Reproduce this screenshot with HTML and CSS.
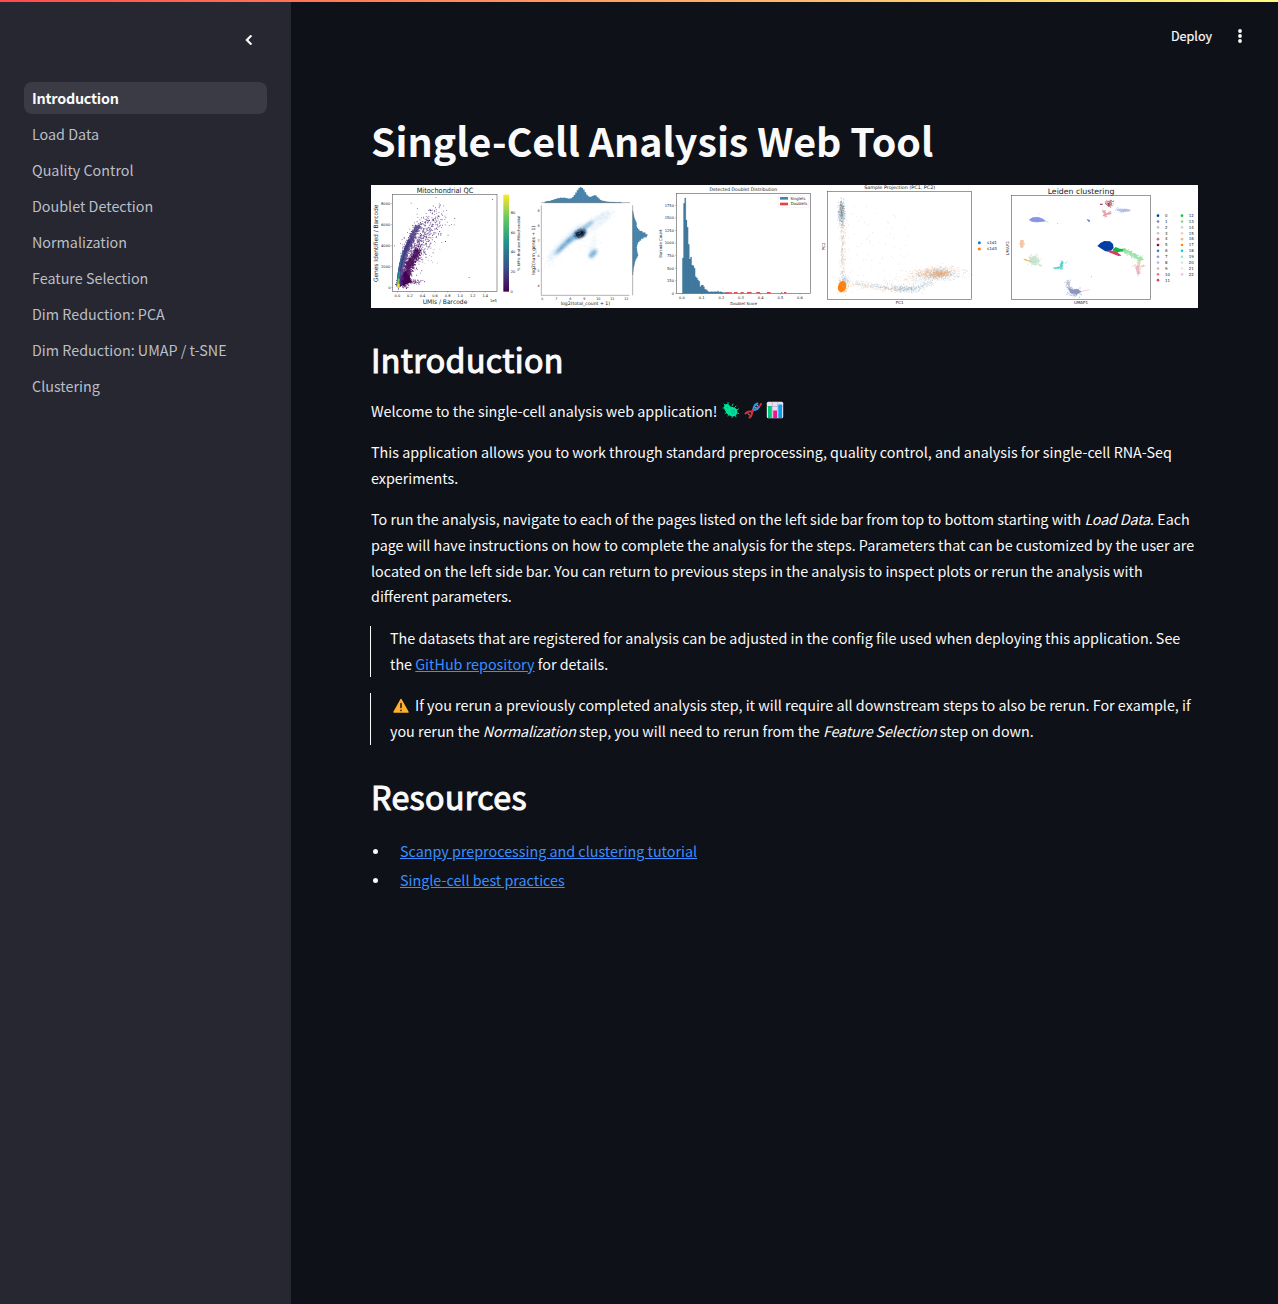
FILE: index.html
```html
<!DOCTYPE html>
<html lang="en">
<head>
<meta charset="utf-8">
<title>Single-Cell Analysis Web Tool</title>
<link rel="stylesheet" href="styles.css">
</head>
<body>
<div class="decoration"></div>
<div class="app">
  <aside class="sidebar">
    <button class="collapse" aria-label="Collapse sidebar">
      <svg width="20" height="20" viewBox="0 0 24 24"><path fill="#fafafa" stroke="#fafafa" stroke-width=".8" d="M15.41 7.41 14 6l-6 6 6 6 1.41-1.41L10.83 12z"/></svg>
    </button>
    <nav class="nav">
      <a class="nav-item active">Introduction</a>
      <a class="nav-item">Load Data</a>
      <a class="nav-item">Quality Control</a>
      <a class="nav-item">Doublet Detection</a>
      <a class="nav-item">Normalization</a>
      <a class="nav-item">Feature Selection</a>
      <a class="nav-item">Dim Reduction: PCA</a>
      <a class="nav-item">Dim Reduction: UMAP / t-SNE</a>
      <a class="nav-item">Clustering</a>
    </nav>
  </aside>
  <main class="main">
    <header class="toolbar">
      <span class="deploy">Deploy</span>
      <svg class="kebab" width="20" height="20" viewBox="0 0 20 20" fill="#fafafa"><circle cx="10" cy="5" r="1.9"/><circle cx="10" cy="10" r="1.9"/><circle cx="10" cy="15" r="1.9"/></svg>
    </header>
    <article class="content">
      <h1>Single-Cell Analysis Web Tool</h1>
      <svg class="banner" id="banner" viewBox="0 0 827 123" width="827" height="123">
        <defs>
          <linearGradient id="viridis" x1="0" y1="1" x2="0" y2="0">
            <stop offset="0" stop-color="#440154"/><stop offset=".25" stop-color="#3b528b"/><stop offset=".5" stop-color="#21918c"/><stop offset=".75" stop-color="#5ec962"/><stop offset="1" stop-color="#fde725"/>
          </linearGradient>
          <filter id="soft" x="-50%" y="-50%" width="200%" height="200%"><feGaussianBlur stdDeviation="4"/></filter>
        </defs>
        <g id="qc" transform="translate(-3 -3) scale(.33333)"></g>
        <g id="density" transform="translate(155 -3) scale(.33333)"></g>
        <g id="doublets" transform="translate(281 -3) scale(.33333)"></g>
        <g id="pca" transform="translate(445 -3) scale(.33333)"></g>
        <g id="leiden" transform="translate(629 -3) scale(.33333)"></g>
      </svg>
      <h2>Introduction</h2>
      <p class="welcome"><span>Welcome to the single-cell analysis web application!</span>
        <svg class="emoji" viewBox="0 0 18 18"><g stroke="#00cf83" stroke-width="1" stroke-linecap="round"><path d="M2 3l2 2M6 1.500v3M11 3l-1 2M1 7h3M3 12.500l2-1.500M6 15l1-2M10 16.500l.5-2M14 16l-1-2M16.800 12.500l-2-.5M16.500 8l-2 1M14 5l-1.500 1.500"/></g><path fill="#00e394" d="M2 6c0-3 3-4 5.500-1.500C9 6.500 10 5.500 12 6.500c3 1 4.500 4 2.500 7s-5.500 2-7.500.5C5 13 4 12 3.500 10 2.500 9 2 7.500 2 6z"/><circle cx="11" cy="10.800" r="2" fill="#00b8a0"/><circle cx="11" cy="10.800" r=".9" fill="#1bd9c0"/><circle cx="5.500" cy="6.500" r=".8" fill="#00bd79"/></svg>
        <svg class="emoji" viewBox="0 0 18 18"><g fill="none" stroke-linecap="round"><path stroke="#a9c5e8" stroke-width="1" d="M4 12.500l2 2M10.500 5.500l3 3M12.500 4l3 2M6.500 10.500l2 1.500"/><path stroke="#e32a32" stroke-width="2" d="M1.500 12.500C4 8.500 7 12 9 9.500M12 7.500c1.500-2 4-1 5-4.500"/><path stroke="#3193e6" stroke-width="2" d="M9 9.500C10 7 9 4 13.500 2.500M9 9.500c1.500-1.500 4 .5 5.500-3"/><path stroke="#e32a32" stroke-width="2" d="M5.500 16.500C9 15 7 12 9 9.500"/></g></svg>
        <svg class="emoji" viewBox="0 0 18 18"><rect x=".8" y=".8" width="16.400" height="16.400" rx="1.500" fill="#e9dff0"/><path stroke="#b9a9c5" stroke-width=".7" d="M1 5.500h16M6.300 1v16M11.700 1v16"/><path fill="#00c77d" d="M2 5h3.800v12H2z"/><path fill="#f0148c" d="M7.200 9.500H11V17H7.200z"/><path fill="#00a4ed" d="M12.300 3.500h3.800V17h-3.800z"/></svg>
      </p>
      <p>This application allows you to work through standard preprocessing, quality control, and analysis for single-cell RNA-Seq<br>experiments.</p>
      <p>To run the analysis, navigate to each of the pages listed on the left side bar from top to bottom starting with <em>Load Data</em>. Each<br>page will have instructions on how to complete the analysis for the steps. Parameters that can be customized by the user are<br>located on the left side bar. You can return to previous steps in the analysis to inspect plots or rerun the analysis with<br>different parameters.</p>
      <blockquote><p>The datasets that are registered for analysis can be adjusted in the config file used when deploying this application. See<br>the <a>GitHub repository</a> for details.</p></blockquote>
      <blockquote><p><svg class="warning" viewBox="0 0 18 18"><path fill="#ffb02e" stroke="#ffb02e" stroke-width="1.500" stroke-linejoin="round" d="M9 2.500 16 15H2z"/><path stroke="#30251a" stroke-width="1.700" stroke-linecap="round" d="M9 6.500v4M9 13.300v.1"/></svg>If you rerun a previously completed analysis step, it will require all downstream steps to also be rerun. For example, if<br>you rerun the <em>Normalization</em> step, you will need to rerun from the <em>Feature Selection</em> step on down.</p></blockquote>
      <h2>Resources</h2>
      <ul>
        <li><a>Scanpy preprocessing and clustering tutorial</a></li>
        <li><a>Single-cell best practices</a></li>
      </ul>
    </article>
  </main>
</div>
<script src="plots.js"></script>
</body>
</html>
```
FILE: styles.css
```css
* { box-sizing: border-box; }
body {
  margin: 0;
  background: #0e1117;
  color: #fafafa;
  font-family: "Noto Sans CJK SC", "Noto Sans", sans-serif;
  font-size: 14.33px;
  line-height: 25.6px;
}
.decoration {
  position: absolute;
  inset: 0 0 auto 0;
  height: 2px;
  background: linear-gradient(90deg, #ff4b4b, #fffd80);
}
.app { display: flex; min-height: 1304px; }
.sidebar {
  width: 291px;
  flex: none;
  padding: 30px 24px 0;
  background: #262730;
  display: flex;
  flex-direction: column;
}
.collapse {
  align-self: flex-end;
  width: 20px;
  height: 20px;
  margin: 0 8px 32px 0;
  padding: 0;
  border: 0;
  background: none;
}
.collapse svg { display: block; }
.nav { display: flex; flex-direction: column; gap: 4px; }
.nav-item {
  height: 32px;
  padding: 0 8px;
  border-radius: 8px;
  line-height: 32px;
  color: #bcbfc7;
  white-space: nowrap;
}
.nav-item.active { background: #3b3b46; color: #fafafa; font-weight: 700; letter-spacing: -.22px; }
.main { flex: 1; min-width: 0; }
.toolbar {
  height: 72px;
  padding-right: 28px;
  display: flex;
  justify-content: flex-end;
  align-items: center;
  gap: 18px;
}
.deploy { font-size: 12.55px; -webkit-text-stroke: .2px #fafafa; }
.kebab { display: block; }
.content { padding: 24px 80px 0; white-space: nowrap; }
h1 {
  margin: 0;
  padding: 18px 0;
  font-size: 39.4px;
  line-height: 52.8px;
  font-weight: 700;
  letter-spacing: -.03px;
}
h2 {
  margin: 0;
  padding: 14.5px 0 17.5px;
  font-size: 32.2px;
  line-height: 43.2px;
  font-weight: 400;
  letter-spacing: .35px;
  -webkit-text-stroke: 1.1px #fafafa;
}
.banner { display: block; margin-bottom: 16px; background: #fff; font-family: "DejaVu Sans", sans-serif; }
p { margin: -1.4px 0 17.4px; }
.welcome { display: flex; align-items: center; gap: 4px; height: 25.6px; }
.welcome span { margin-right: 1px; }
.emoji { width: 18px; height: 18px; }
em { letter-spacing: -.16px; }
blockquote {
  display: flow-root;
  margin: 0 0 16px -1px;
  padding-left: 19px;
  border-left: 1px solid #fafafa;
}
blockquote p { margin: -1.2px 0 1.2px; }
.warning { width: 18px; height: 18px; margin: 0 5px 0 2px; vertical-align: -4px; }
.content a { color: #3b8eff; text-decoration: underline; }
ul { margin: -1px 0 0; padding: 0; list-style: none; }
li { display: flex; align-items: center; gap: 24px; margin-top: 3.2px; padding-left: 2px; }
li::before { content: ""; width: 5px; height: 5px; border-radius: 50%; background: #fafafa; margin-top: 2px; margin-right: -2px; }
```
FILE: plots.js
```js
const NS = 'http://www.w3.org/2000/svg';
let seed = 7;
const rnd = () => (seed = (seed * 16807) % 2147483647) / 2147483647;
const gauss = () => Math.sqrt(-2 * Math.log(rnd())) * Math.cos(6.2832 * rnd());
const make = (g, tag, attrs, text) => {
  const e = document.createElementNS(NS, tag);
  for (const k in attrs) e.setAttribute(k, attrs[k]);
  if (text !== undefined) e.textContent = text;
  g.appendChild(e);
  return e;
};
const get = id => document.getElementById(id);
// Text centred on x, with its baseline at y.
const label = (g, t, x, y, size, width, turn) => {
  const a = { x, y, 'font-size': size, 'text-anchor': 'middle', fill: '#222' };
  if (width) { a.textLength = width; a.lengthAdjust = 'spacingAndGlyphs'; }
  if (turn) a.transform = `rotate(-90 ${x} ${y})`;
  make(g, 'text', a, t);
};
const frame = (g, x1, y1, x2, y2) => make(g, 'rect', { x: x1, y: y1, width: x2 - x1, height: y2 - y1, fill: 'none', stroke: '#666', 'stroke-width': 2 });
const path = (g, d, attrs) => make(g, 'path', { d, ...attrs });
// Scatter of small squares; place() yields one point.
const dots = (g, n, fill, opacity, size, place) => {
  let d = '';
  for (let i = 0; i < n; i++) {
    const [x, y] = place();
    d += `M${x.toFixed(1)} ${y.toFixed(1)}h${size}v${size}h-${size}z`;
  }
  path(g, d, { fill, 'fill-opacity': opacity });
};
const blob = (cx, cy, sx, sy, deg = 0) => () => {
  const a = gauss() * sx, b = gauss() * sy, r = deg * Math.PI / 180;
  return [cx + a * Math.cos(r) - b * Math.sin(r), cy + a * Math.sin(r) + b * Math.cos(r)];
};
// Points along a polyline with normal spread; bias > 1 favours its start.
const along = (pts, spread, bias = 1) => () => {
  const t = Math.pow(rnd(), bias) * (pts.length - 1), i = Math.min(Math.floor(t), pts.length - 2), f = t - i;
  return [pts[i][0] + (pts[i + 1][0] - pts[i][0]) * f + gauss() * spread, pts[i][1] + (pts[i + 1][1] - pts[i][1]) * f + gauss() * spread];
};

// Mitochondrial QC
{
  const g = get('qc');
  dots(g, 520, '#482475', .85, 2.5, () => { const t = rnd() * rnd() * 1.2; return [130 + t * 80 + gauss() * 15, 215 - t * 115 + gauss() * 26]; });
  dots(g, 80, '#482475', .8, 2.5, blob(200, 115, 24, 22, -30));
  dots(g, 900, '#440154', .9, 3, along([[108, 304], [115, 280], [120, 250], [130, 235], [150, 205]], 6, 1.2));
  path(g, 'M90 316L98 285L112 265L125 285L130 300Z', { fill: '#440154' });
  dots(g, 110, '#440154', .8, 2, () => [125 + rnd() * rnd() * 60, 298 + gauss() * 3]);
  dots(g, 1100, '#46327e', .85, 3, along([[92, 310], [99, 260], [112, 205], [127, 170], [150, 128]], 4));
  path(g, 'M90 312Q93 235 125 175', { stroke: '#453781', 'stroke-width': 9, fill: 'none' });
  path(g, 'M89 312Q90 255 107 208', { stroke: '#31688e', 'stroke-width': 5, fill: 'none' });
  path(g, 'M89 314L95 268', { stroke: '#21918c', 'stroke-width': 5 });
  path(g, 'M90 315L92 290', { stroke: '#7ad151', 'stroke-width': 6 });
  path(g, 'M87 317h8v-12h-6z', { fill: '#fde725' });
  dots(g, 30, '#440154', .5, 2, () => [140 + rnd() * 80, 150 + rnd() * 100]);
  path(g, 'M372 51h3v2h-3zM302 285h3v2h-3zM231 177h3v3h-3zM133 129h3v3h-3z', { fill: '#59436b' });
  frame(g, 73, 38, 387, 328);
  label(g, 'Mitochondrial QC', 231, 32, 22, 170);
  label(g, 'UMIs / Barcode', 231, 367, 19, 134);
  label(g, 'Genes Identified / Barcode', 31, 184, 18, 232, true);
  ['0.0', '0.2', '0.4', '0.6', '0.8', '1.0', '1.2', '1.4'].forEach((t, i) => { label(g, t, 88 + i * 37.700, 346, 11, 17); path(g, `M${88 + i * 37.7} 328v4`, { stroke: '#555' }); });
  ['0', '2000', '4000', '6000', '8000'].forEach((t, i) => { label(g, t, i ? 53 : 64, 321 - i * 63, 11); path(g, `M69 ${317 - i * 63}h4`, { stroke: '#555' }); });
  label(g, '1e5', 376, 361, 11);
  make(g, 'rect', { x: 406, y: 38, width: 17, height: 291, fill: 'url(#viridis)' });
  ['0', '20', '40', '60', '80'].forEach((t, i) => label(g, t, i ? 435 : 431, 332 - i * 59, 11));
  label(g, '% UMIs that are Mitochondrial', 455, 184, 11, 166, true);
}

// Gene / count density
{
  const g = get('density');
  const haze = (cx, cy, rx, ry, deg, fill, opacity) => make(g, 'ellipse', { cx, cy, rx, ry, fill, opacity, filter: 'url(#soft)', transform: `rotate(${deg} ${cx} ${cy})` });
  haze(118, 178, 75, 11, -46, '#d2e4f4', .45);
  haze(195, 122, 72, 7, -31, '#cfe3f4', .55);
  haze(219, 126, 45, 7, -38, '#deebf7', .5);
  haze(112, 192, 34, 5, -45, '#2e7ebc', .85);
  haze(145, 163, 32, 7, -42, '#4292c6', .8);
  haze(181, 133, 26, 5, -37, '#4292c6', .75);
  haze(200, 190, 8, 35, 12, '#eaf3fa', .5);
  haze(201, 215, 15, 7, -48, '#4292c6', .8);
  haze(162, 155, 20, 11, -30, '#08519c', .95);
  haze(163, 155, 14, 8, -25, '#000818', 1);
  haze(163, 155, 12, 7, -25, '#000818', .9);
  dots(g, 380, '#c9dff0', .35, 3, along([[60, 245], [90, 210], [140, 165], [200, 120], [260, 94]], 8));
  dots(g, 110, '#dbe9f5', .4, 3, blob(190, 190, 22, 28, -35));
  const bars = (heights, step, draw) => path(g, heights.map((h, i) => draw(i * step, h)).join(''), { fill: '#4b87ae', stroke: '#4680a6', 'stroke-width': .6 });
  bars([3, 4, 5, 5, 7, 8, 10, 11, 13, 13, 15, 14, 15, 14, 13, 12, 12, 13, 17, 23, 30, 37, 43, 46, 44, 39, 31, 24, 19, 17, 18, 20, 22, 21, 16, 12, 8, 6, 5, 4, 3, 3, 2, 2, 2, 2, 1, 1, 1, 1], 4.6, (p, h) => `M${56 + p} 62v-${h}h4.600v${h}z`);
  bars([1, 2, 3, 4, 5, 7, 9, 11, 12, 11, 13, 16, 20, 29, 38, 44, 42, 32, 25, 20, 16, 14, 13, 12, 13, 13, 14, 15, 16, 14, 11, 9, 7, 6, 5, 4, 3, 2, 2, 1, 1], 4.7, (p, h) => `M320 ${86 + p}h${h}v4.700h-${h}z`);
  path(g, 'M46 70V340H310M46 62H312M320 70V340', { fill: 'none', stroke: '#666', 'stroke-width': 1.5 });
  ['6', '7', '8', '9', '10', '11', '12'].forEach((t, i) => label(g, t, 49 + i * 42, 353, 10));
  ['9', '8', '7', '6', '5', '4'].forEach((t, i) => label(g, t, 38, 89 + i * 45.500, 10));
  label(g, 'log2(total_count + 1)', 178, 368, 14, 148);
  label(g, 'log2(num_genes + 1)', 26, 205, 14, 147, true);
}

// Doublet distribution
{
  const g = get('doublets');
  const h = [106, 270, 286, 220, 198, 147, 103, 109, 84, 83, 75, 50, 46, 40, 36, 20, 24, 25, 20, 12, 11, 8, 5, 4, 5, 5, 4, 5, 5, 4, 7, 3, 5, 4, 3, 2, 2, 3, 2, 2];
  path(g, h.map((v, i) => `M${91 + i * 3.500} 334v-${v}h3.500v${v}z`).join(''), { fill: '#477fa5', stroke: '#3a6f90', 'stroke-width': .7 });
  path(g, 'M222 334v-3h18v3zM246 334v-4h11v4zM266 334v-4h9v4zM285 334v-4h14v4zM313 334v-4h11v4zM345 334v-4h11v4zM387 334v-3h4v3zM396 334v-4h7v4z', { fill: '#dc4b50' });
  frame(g, 73, 34, 476, 334);
  label(g, 'Detected Doublet Distribution', 274, 27, 14, 203);
  ['0', '250', '500', '750', '1000', '1250', '1500', '1750'].forEach((t, i) => { make(g, 'text', { x: 66, y: 338 - i * 37.700, 'font-size': 11, 'text-anchor': 'end', fill: '#222' }, t); path(g, `M69 ${334 - i * 37.7}h4`, { stroke: '#555' }); });
  ['0.0', '0.1', '0.2', '0.3', '0.4', '0.5', '0.6'].forEach((t, i) => { label(g, t, 90 + i * 59, 352, 11); path(g, `M${90 + i * 59} 334v4`, { stroke: '#555' }); });
  label(g, 'Doublet Score', 275, 368, 12, 80);
  label(g, 'Barcode Count', 30, 185, 12, 85, true);
  make(g, 'rect', { x: 379, y: 40, width: 92, height: 36, rx: 2, fill: '#fff', stroke: '#ddd' });
  path(g, 'M384 45h24v8h-24z', { fill: '#4585ac' });
  path(g, 'M384 62h24v8h-24z', { fill: '#e84044' });
  label(g, 'Singlets', 438, 53, 12, 45);
  label(g, 'Doublets', 441, 70, 12, 50);
}

// Sample projection
{
  const g = get('pca');
  dots(g, 420, '#5e8fae', .45, 2, blob(76, 91, 5, 17));
  dots(g, 110, '#5b5450', .6, 2, blob(76, 85, 4, 15));
  dots(g, 150, '#e9a16b', .5, 2, () => [79 + gauss() * 4, 100 + rnd() * 170]);
  dots(g, 110, '#749aae', .5, 2, () => [79 + gauss() * 5, 90 + rnd() * 190]);
  dots(g, 140, '#7394a8', .5, 2, blob(83, 296, 7, 9));
  dots(g, 520, '#7aa2bd', .5, 2, blob(365, 275, 34, 9, -3));
  dots(g, 500, '#f0a165', .55, 2, blob(355, 273, 32, 9, -3));
  dots(g, 140, '#e68e4b', .6, 2, blob(372, 275, 12, 5));
  dots(g, 330, '#779eb7', .5, 2, along([[120, 302], [190, 314], [250, 320], [300, 319], [345, 302]], 5));
  dots(g, 160, '#7395ab', .5, 2, blob(265, 320, 24, 5));
  dots(g, 130, '#efb280', .5, 2, along([[100, 305], [190, 316], [260, 324]], 4));
  dots(g, 110, '#efb98d', .5, 2, blob(260, 294, 45, 12, -10));
  dots(g, 75, '#9baeb9', .5, 2, () => [85 + rnd() * 190, 70 + rnd() * 215]);
  make(g, 'ellipse', { cx: 78, cy: 314, rx: 12, ry: 17, fill: '#ff7f0e', transform: 'rotate(18 78 314)' });
  dots(g, 90, '#ff8c24', .8, 2, blob(81, 315, 8, 10));
  frame(g, 35, 28, 467, 352);
  label(g, 'Sample Projection (PC1, PC2)', 251, 22, 14, 213);
  label(g, 'PC1', 251, 367, 12);
  label(g, 'PC2', 28, 193, 12, 0, true);
  make(g, 'circle', { cx: 490, cy: 182, r: 4.500, fill: '#1f77b4' });
  make(g, 'circle', { cx: 490, cy: 201, r: 4.500, fill: '#ff7f0e' });
  label(g, 's1d1', 528, 186, 12, 30);
  label(g, 's1d3', 528, 205, 12, 30);
}

// Leiden clusters
{
  const g = get('leiden');
  path(g, 'M88 113Q96 105 112 106Q129 109 136 117Q110 122 94 118Z', { fill: '#8595e1', stroke: '#8595e1', 'stroke-width': 2 });
  path(g, 'M133 117L146 121', { stroke: '#a5ddd1', 'stroke-width': 2 });
  path(g, 'M348 82L365 82L378 80L392 83L390 88L371 90L357 87Z', { fill: '#b5bbe3' });
  dots(g, 50, '#b5bbe3', .8, 2, blob(359, 84, 8, 4));
  dots(g, 55, '#b76a7b', .9, 3, blob(327, 62, 6, 4));
  path(g, 'M300 65h8v4h-8zM323 63h6v11h-4z', { fill: '#a84860' });
  dots(g, 85, '#e28995', .8, 3, along([[310, 84], [314, 99], [321, 94], [330, 91]], 2));
  path(g, 'M260 112h6v2h4v5h-5z', { fill: '#6983e2' });
  dots(g, 120, '#efad79', .7, 3, blob(64, 186, 2.8, 5));
  path(g, 'M69 230l7 1 9 5-4 1z', { fill: '#ef9708' });
  path(g, 'M82 236l14 2', { stroke: '#e1af73', 'stroke-width': 3 });
  dots(g, 210, '#b4d8ba', .7, 3, blob(102, 233, 7, 6));
  dots(g, 60, '#b9d7bc', .7, 2, along([[88, 235], [108, 244], [124, 251]], 2));
  dots(g, 90, '#2dccc7', .9, 2.5, along([[162, 257], [179, 256], [183, 245], [186, 238], [184, 260]], 1.5));
  dots(g, 18, '#9eddcf', .8, 2, along([[183, 235], [193, 242], [203, 239]], 1));
  dots(g, 60, '#a9afd0', .8, 3, along([[202, 296], [203, 308], [211, 320]], 3));
  path(g, 'M204 318l16 5 11-3 14 9-14 8-19-4z', { fill: '#8c96c2' });
  dots(g, 100, '#8c96c2', .8, 3, blob(222, 328, 8, 5));
  path(g, 'M242 329L268 323', { stroke: '#e6b6d3', 'stroke-width': 2 });
  path(g, 'M292 192l10-10 11-5 17 1 9 8 2 12-10 10-15 0-14-9z', { fill: '#023fa5' });
  path(g, 'M337 204l10-9 12 5 18 1-4 7-13 1-13 3z', { fill: '#11b83e' });
  path(g, 'M319 207l12-2 20 5 14 11-10 1-25-10z', { fill: '#d33f6a' });
  dots(g, 200, '#8cdd9b', .85, 3, along([[370, 205], [385, 211], [404, 221], [425, 232]], 3.4));
  dots(g, 75, '#e3c3a5', .8, 2.5, along([[398, 250], [416, 247], [416, 237], [416, 252], [434, 249]], 2));
  dots(g, 75, '#e4a4b0', .8, 3, along([[411, 252], [413, 262], [415, 275]], 2.5));
  path(g, 'M116 93h2v2h-2zM171 124h3v2h-3zM273 283h3v3h-3z', { fill: '#bbb' });
  frame(g, 34, 41, 452, 352);
  label(g, 'Leiden clustering', 243, 35, 23, 200);
  label(g, 'UMAP1', 243, 367, 12);
  label(g, 'UMAP2', 28, 199, 12, 0, true);
  const colors = ['#023fa5', '#7d87b9', '#bec1d4', '#d6bcc0', '#bb7784', '#8e063b', '#4a6fe3', '#8595e1', '#b5bbe3', '#e6afb9', '#e07b91', '#d33f6a', '#11c638', '#8dd593', '#c6dec7', '#ead3c6', '#f0b98d', '#ef9708', '#0fcfc0', '#9cded6', '#d5eae7', '#f3e1eb', '#f6c4e1'];
  colors.forEach((fill, i) => {
    const right = i > 11, y = 101 + (right ? i - 12 : i) * 17.6;
    make(g, 'circle', { cx: right ? 546 : 474, cy: y, r: 4, fill });
    make(g, 'text', { x: right ? 566 : 495, y: y + 4, 'font-size': 12, fill: '#222' }, i);
  });
}
```
